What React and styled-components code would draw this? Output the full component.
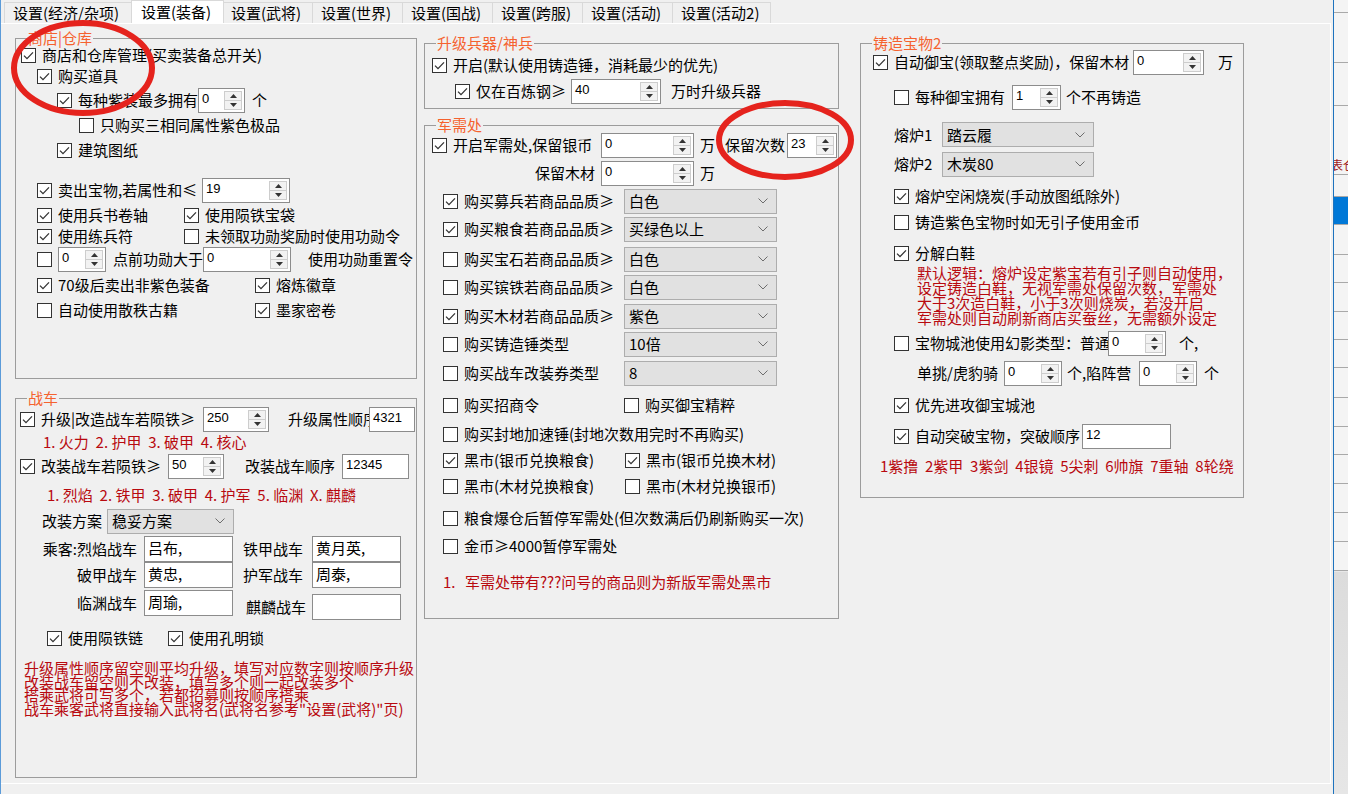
import React from 'react';
import styled, { createGlobalStyle } from 'styled-components';

const GlobalStyle = createGlobalStyle`
  html, body { margin: 0; padding: 0; background: #f0f0f0; }
  body {
    font-family: "Noto Sans CJK SC", "Noto Sans", sans-serif;
    font-size: 15px;
    color: #000;
  }
`;

const Window = styled.div`
  position: relative;
  width: 1348px;
  height: 794px;
  overflow: hidden;
  display: flex;
  background: #f0f0f0;
`;

const Main = styled.div`
  width: 1332px;
  flex: none;
  display: flex;
  flex-direction: column;
  border-left: 1px solid #5b9bd9;
`;

const TabBar = styled.div`
  height: 23px;
  display: flex;
  align-items: flex-end;
  padding-left: 3px;
`;

const Tab = styled.div`
  box-sizing: border-box;
  width: ${p => p.$w}px;
  height: ${p => (p.$active ? 23 : 21)}px;
  padding-left: ${p => (p.$active ? 9 : 8)}px;
  margin: ${p => (p.$active ? '0 -2px' : '0 -1px 0 0')};
  border: 1px solid #d9d9d9;
  border-bottom: none;
  background: ${p => (p.$active ? '#fff' : '#f0f0f0')};
  line-height: ${p => (p.$active ? 22 : 20)}px;
  white-space: nowrap;
  position: relative;
  z-index: ${p => (p.$active ? 1 : 0)};
`;

const Panel = styled.div`
  box-sizing: border-box;
  height: 761px;
  margin-right: 2px;
  border-top: 1px solid #fff;
  border-right: 1px solid #fff;
  border-bottom: 1px solid #fff;
  display: flex;
  align-items: flex-start;
  padding-left: 14px;
`;

const Column = styled.div`
  width: ${p => p.$w}px;
  margin-left: ${p => p.$ml || 0}px;
  flex: none;
  display: flex;
  flex-direction: column;
`;

const Group = styled.fieldset`
  box-sizing: border-box;
  width: 100%;
  height: ${p => p.$h}px;
  margin: ${p => p.$mt}px 0 0 0;
  padding: 0;
  min-width: 0;
  border: 1px solid #9c9c9c;
  display: flex;
  flex-direction: column;
`;

const Legend = styled.legend`
  margin-left: 11px;
  padding: 0 1px;
  line-height: 16px;
  color: #f5622f;
`;

const Row = styled.div`
  display: flex;
  align-items: center;
  flex: none;
  height: ${p => p.$h || 22}px;
  margin-top: ${p => p.$mt || 0}px;
  padding-left: ${p => p.$in || 0}px;
  white-space: nowrap;
`;

const Text = styled.span`
  flex: none;
  line-height: 18px;
  margin-left: ${p => p.$ml || 0}px;
  width: ${p => (p.$w ? `${p.$w}px` : 'auto')};
  text-align: ${p => (p.$right ? 'right' : 'left')};
  overflow: ${p => (p.$clip ? 'hidden' : 'visible')};
`;

const Shift = styled.div`
  display: flex;
  align-items: center;
  margin-top: 8px;
`;

const CheckWrap = styled.div`
  display: flex;
  align-items: center;
  flex: none;
  width: ${p => (p.$w ? `${p.$w}px` : 'auto')};
`;

const Box = styled.span`
  box-sizing: border-box;
  width: 15px;
  height: 15px;
  flex: none;
  border: 1px solid #333;
  background: #fff;
  display: flex;
  align-items: center;
  justify-content: center;
`;

const CheckLabel = styled.span`
  flex: none;
  margin-left: 6px;
  line-height: 18px;
  width: ${p => (p.$w ? `${p.$w}px` : 'auto')};
`;

function Check({ on, w, lw, children }) {
  return (
    <CheckWrap $w={w}>
      <Box>
        {on && (
          <svg width="11" height="9" viewBox="0 0 11 9">
            <path d="M1 4.6 L4 7.6 L10 1.4" fill="none" stroke="#333" strokeWidth="1.3" />
          </svg>
        )}
      </Box>
      {children && <CheckLabel $w={lw}>{children}</CheckLabel>}
    </CheckWrap>
  );
}

const Field = styled.div`
  box-sizing: border-box;
  width: ${p => p.$w}px;
  height: ${p => p.$hh || 25}px;
  margin-left: ${p => p.$ml || 0}px;
  flex: none;
  display: flex;
  border: 1px solid #8c8c8c;
  background: #fff;
`;

const Value = styled.span`
  flex: 1;
  overflow: hidden;
  font-family: ${p => (p.$cjk ? '"Noto Sans CJK SC", sans-serif' : '"Liberation Sans", Arial, sans-serif')};
  font-size: ${p => (p.$cjk ? 15 : 13)}px;
  line-height: ${p => (p.$cjk ? 20 : 15)}px;
  padding: ${p => (p.$cjk ? '1px 0 0 3px' : '2px 0 0 3px')};
`;

const SpinBtns = styled.div`
  width: 16px;
  margin: 2px 2px 2px 0;
  display: flex;
  flex-direction: column;
  border: 1px solid #cdcdcd;
  background: #f2f2f2;
`;

const SpinBtn = styled.div`
  flex: 1;
  display: flex;
  align-items: center;
  justify-content: center;
  & + & { border-top: 1px solid #cdcdcd; }
`;

function Spin({ w, ml, value }) {
  return (
    <Field $w={w} $ml={ml}>
      <Value>{value}</Value>
      <SpinBtns>
        <SpinBtn>
          <svg width="7" height="4" viewBox="0 0 7 4"><path d="M0 4 L3.5 0 L7 4 Z" fill="#333" /></svg>
        </SpinBtn>
        <SpinBtn>
          <svg width="7" height="4" viewBox="0 0 7 4"><path d="M0 0 L3.5 4 L7 0 Z" fill="#333" /></svg>
        </SpinBtn>
      </SpinBtns>
    </Field>
  );
}

function Input({ w, ml, value, cjk, h }) {
  return (
    <Field $w={w} $ml={ml} $hh={h}>
      <Value $cjk={cjk}>{value}</Value>
    </Field>
  );
}

const SelectBox = styled.div`
  box-sizing: border-box;
  width: ${p => p.$w}px;
  height: 25px;
  flex: none;
  display: flex;
  align-items: center;
  justify-content: space-between;
  padding: 0 8px 0 4px;
  border: 1px solid #adadad;
  background: #e1e1e1;
  line-height: 18px;
`;

function Select({ w, value }) {
  return (
    <SelectBox $w={w}>
      <span>{value}</span>
      <svg width="10" height="6" viewBox="0 0 10 6">
        <path d="M0.5 0.5 L5 5 L9.5 0.5" fill="none" stroke="#6d6d6d" strokeWidth="1" />
      </svg>
    </SelectBox>
  );
}

const Red = styled.div`
  flex: none;
  color: #b8090f;
  white-space: pre;
  margin-top: ${p => p.$mt || 0}px;
  padding-left: ${p => p.$in || 0}px;
  line-height: ${p => p.$lh || 18}px;
  height: ${p => (p.$h ? `${p.$h}px` : 'auto')};
  display: flex;
  align-items: center;
`;

const Para = styled.div`
  flex: none;
  color: #b8090f;
  white-space: pre;
  margin-top: ${p => p.$mt || 0}px;
  padding-left: ${p => p.$in || 0}px;
  line-height: ${p => p.$lh}px;
`;

const SideStrip = styled.div`
  flex: 1;
  border-left: 1px solid #1e73be;
  display: flex;
  flex-direction: column;
  background: linear-gradient(#f4f4f4, #f4f4f4 571px, #dcdcdc 572px, #e6e6e6);
  overflow: hidden;
`;

const StripRow = styled.div`
  box-sizing: border-box;
  flex: none;
  height: ${p => p.$h}px;
  border-bottom: 1px solid #a9a9a9;
  background: ${p => (p.$sel ? '#0078d7' : 'transparent')};
  color: #a02020;
  font-size: 12px;
  line-height: 14px;
  display: flex;
  align-items: flex-end;
  padding-bottom: 2px;
  white-space: nowrap;
  text-indent: -3px;
`;

const Ring = styled.svg`
  position: absolute;
  left: ${p => p.$x}px;
  top: ${p => p.$y}px;
  pointer-events: none;
`;

const tabs = [
  ['设置(经济/杂项)', 130],
  ['设置(装备)', 93],
  ['设置(武将)', 91],
  ['设置(世界)', 91],
  ['设置(国战)', 91],
  ['设置(跨服)', 91],
  ['设置(活动)', 91],
  ['设置(活动2)', 99],
];

const stripRows = [13, 50, 43, 69, 22, 28, 30, 28, 29, 28, 28, 30, 29, 28, 29, 29, 29, 29];

const buyRows = [
  [true, '购买募兵若商品品质≥', '白色', 2],
  [true, '购买粮食若商品品质≥', '买绿色以上', 2],
  [false, '购买宝石若商品品质≥', '白色', 4],
  [false, '购买镔铁若商品品质≥', '白色', 2],
  [true, '购买木材若商品品质≥', '紫色', 3],
  [false, '购买铸造锤类型', '10倍', 2],
  [false, '购买战车改装券类型', '8', 3],
];

export default function App() {
  return (
    <Window>
      <GlobalStyle />
      <Main>
        <TabBar>
          {tabs.map(([t, w], i) => (
            <Tab key={t} $w={w} $active={i === 1}>{t}</Tab>
          ))}
        </TabBar>
        <Panel>
          <Column $w={402}>
            <Group $h={349} $mt={6}>
              <Legend>商店|仓库</Legend>
              <Row $h={18} $in={5}><Check on>商店和仓库管理(买卖装备总开关)</Check></Row>
              <Row $mt={1} $in={21}><Check on>购买道具</Check></Row>
              <Row $h={26} $in={41}>
                <Check on lw={120}>每种紫装最多拥有</Check>
                <Spin w={47} value="0" />
                <Text $ml={7}>个</Text>
              </Row>
              <Row $mt={1} $in={63}><Check>只购买三相同属性紫色极品</Check></Row>
              <Row $mt={3} $in={41}><Check on>建筑图纸</Check></Row>
              <Row $h={26} $mt={16} $in={21}>
                <Check on lw={144}>卖出宝物,若属性和≤</Check>
                <Spin w={88} value="19" />
              </Row>
              <Row $mt={1} $in={21}>
                <Check on w={147}>使用兵书卷轴</Check>
                <Check on>使用陨铁宝袋</Check>
              </Row>
              <Row $h={20} $in={21}>
                <Check on w={147}>使用练兵符</Check>
                <Check>未领取功勋奖励时使用功勋令</Check>
              </Row>
              <Row $h={26} $in={21}>
                <Check />
                <Spin w={48} ml={6} value="0" />
                <Text $ml={7} $w={90}>点前功勋大于</Text>
                <Spin w={88} value="0" />
                <Text $ml={17}>使用功勋重置令</Text>
              </Row>
              <Row $mt={2} $in={21}>
                <Check on w={218}>70级后卖出非紫色装备</Check>
                <Check on>熔炼徽章</Check>
              </Row>
              <Row $mt={3} $in={21}>
                <Check w={218}>自动使用散秩古籍</Check>
                <Check on>墨家密卷</Check>
              </Row>
            </Group>

            <Group $h={388} $mt={11}>
              <Legend>战车</Legend>
              <Row $h={26} $in={4}>
                <Check on lw={162}>升级|改造战车若陨铁≥</Check>
                <Spin w={66} value="250" />
                <Text $ml={19} $w={81} $clip>升级属性顺序</Text>
                <Input w={46} value="4321" />
              </Row>
              <Red $h={18} $mt={1} $in={27}>1. 火力  2. 护甲  3. 破甲  4. 核心</Red>
              <Row $h={26} $mt={2} $in={4}>
                <Check on lw={127}>改装战车若陨铁≥</Check>
                <Spin w={56} value="50" />
                <Text $ml={21} $w={97}>改装战车顺序</Text>
                <Input w={67} value="12345" />
              </Row>
              <Red $h={18} $mt={7} $in={31}>1. 烈焰  2. 铁甲  3. 破甲  4. 护军  5. 临渊  X. 麒麟</Red>
              <Row $h={26} $mt={4} $in={26}>
                <Text $w={65}>改装方案</Text>
                <Select w={127} value="稳妥方案" />
              </Row>
              <Row $h={26} $mt={2} $in={24}>
                <Text $w={97} $right>乘客:烈焰战车</Text>
                <Input w={89} ml={7} cjk value="吕布," h={26} />
                <Text $ml={10} $w={60}>铁甲战车</Text>
                <Input w={89} ml={9} cjk value="黄月英," h={26} />
              </Row>
              <Row $h={26} $in={24}>
                <Text $w={97} $right>破甲战车</Text>
                <Input w={89} ml={7} cjk value="黄忠," h={26} />
                <Text $ml={10} $w={60}>护军战车</Text>
                <Input w={89} ml={9} cjk value="周泰," h={26} />
              </Row>
              <Row $h={26} $mt={2} $in={24}>
                <Text $w={97} $right>临渊战车</Text>
                <Input w={89} ml={7} cjk value="周瑜," h={26} />
                <Shift>
                  <Text $ml={13} $w={57}>麒麟战车</Text>
                  <Input w={89} ml={9} cjk value="" h={26} />
                </Shift>
              </Row>
              <Row $mt={11} $in={31}>
                <Check on w={121}>使用陨铁链</Check>
                <Check on>使用孔明锁</Check>
              </Row>
              <Para $mt={12} $in={8} $lh={13.5}>
                {'升级属性顺序留空则平均升级，填写对应数字则按顺序升级\n改装战车留空则不改装，填写多个则一起改装多个\n搭乘武将可写多个，若都招募则按顺序搭乘\n战车乘客武将直接输入武将名(武将名参考"设置(武将)"页)'}
              </Para>
            </Group>
          </Column>

          <Column $w={415} $ml={7}>
            <Group $h={74} $mt={11}>
              <Legend>升级兵器/神兵</Legend>
              <Row $mt={3} $in={7}><Check on>开启(默认使用铸造锤，消耗最少的优先)</Check></Row>
              <Row $h={26} $mt={2} $in={30}>
                <Check on lw={95}>仅在百炼钢≥</Check>
                <Spin w={90} value="40" />
                <Text $ml={10}>万时升级兵器</Text>
              </Row>
            </Group>

            <Group $h={502} $mt={8}>
              <Legend>军需处</Legend>
              <Row $h={24} $in={7}>
                <Check on lw={148}>开启军需处,保留银币</Check>
                <Spin w={93} value="0" />
                <Text $ml={6}>万</Text>
                <Text $ml={10} $w={62}>保留次数</Text>
                <Spin w={50} value="23" />
              </Row>
              <Row $h={26} $mt={3} $in={110}>
                <Text $w={66}>保留木材</Text>
                <Spin w={93} value="0" />
                <Text $ml={6}>万</Text>
              </Row>
              {buyRows.map(([on, label, val, mt]) => (
                <Row key={label} $h={26} $mt={mt} $in={18}>
                  <Check on={on} lw={160}>{label}</Check>
                  <Select w={153} value={val} />
                </Row>
              ))}
              <Row $mt={8} $in={18}>
                <Check w={181}>购买招商令</Check>
                <Check>购买御宝精粹</Check>
              </Row>
              <Row $mt={7} $in={18}><Check>购买封地加速锤(封地次数用完时不再购买)</Check></Row>
              <Row $mt={4} $in={18}>
                <Check on w={182}>黑市(银币兑换粮食)</Check>
                <Check on>黑市(银币兑换木材)</Check>
              </Row>
              <Row $mt={4} $in={18}>
                <Check w={182}>黑市(木材兑换粮食)</Check>
                <Check>黑市(木材兑换银币)</Check>
              </Row>
              <Row $mt={10} $in={18}><Check>粮食爆仓后暂停军需处(但次数满后仍刷新购买一次)</Check></Row>
              <Row $mt={6} $in={18}><Check>金币≥4000暂停军需处</Check></Row>
              <Red $h={20} $mt={15} $in={18}>
                <Text $w={22}>1.</Text>
                <span>军需处带有???问号的商品则为新版军需处黑市</span>
              </Red>
            </Group>
          </Column>

          <Column $w={384} $ml={21}>
            <Group $h={463} $mt={11}>
              <Legend>铸造宝物2</Legend>
              <Row $in={12}>
                <Check on lw={239}>自动御宝(领取整点奖励)，保留木材</Check>
                <Spin w={71} value="0" />
                <Text $ml={14}>万</Text>
              </Row>
              <Row $h={26} $mt={11} $in={33}>
                <Check lw={97}>每种御宝拥有</Check>
                <Spin w={49} value="1" />
                <Text $ml={5}>个不再铸造</Text>
              </Row>
              <Row $h={25} $mt={12} $in={33}>
                <Text $w={48}>熔炉1</Text>
                <Select w={152} value="踏云履" />
              </Row>
              <Row $h={24} $mt={5} $in={33}>
                <Text $w={48}>熔炉2</Text>
                <Select w={152} value="木炭80" />
              </Row>
              <Row $mt={9} $in={33}><Check on>熔炉空闲烧炭(手动放图纸除外)</Check></Row>
              <Row $mt={4} $in={33}><Check>铸造紫色宝物时如无引子使用金币</Check></Row>
              <Row $mt={9} $in={33}><Check on>分解白鞋</Check></Row>
              <Para $mt={1} $in={56} $lh={15}>
                {'默认逻辑：熔炉设定紫宝若有引子则自动使用，\n设定铸造白鞋，无视军需处保留次数，军需处\n大于3次造白鞋，小于3次则烧炭，若没开启\n军需处则自动刷新商店买蚕丝，无需额外设定'}
              </Para>
              <Row $h={26} $mt={5} $in={33}>
                <Check lw={193}>宝物城池使用幻影类型：普通</Check>
                <Spin w={58} value="0" />
                <Text $ml={13}>个,</Text>
              </Row>
              <Row $h={26} $mt={4} $in={56}>
                <Text $w={87}>单挑/虎豹骑</Text>
                <Spin w={58} value="0" />
                <Text $ml={5} $w={72}>个,陷阵营</Text>
                <Spin w={58} value="0" />
                <Text $ml={7}>个</Text>
              </Row>
              <Row $mt={8} $in={33}><Check on>优先进攻御宝城池</Check></Row>
              <Row $h={26} $mt={7} $in={33}>
                <Check on lw={167}>自动突破宝物，突破顺序</Check>
                <Input w={89} value="12" />
              </Row>
              <Red $h={20} $mt={7} $in={19}>1紫撸  2紫甲  3紫剑  4银镜  5尖刺  6帅旗  7重轴  8轮绕</Red>
            </Group>
          </Column>
        </Panel>
      </Main>

      <SideStrip>
        {stripRows.map((h, i) => (
          <StripRow key={i} $h={h} $sel={i === 5}>{i === 3 ? '表仓' : ''}</StripRow>
        ))}
      </SideStrip>

      <Ring $x={8} $y={16} width="155" height="108" viewBox="0 0 155 108">
        <ellipse cx="75" cy="52" rx="69" ry="45" fill="none" stroke="#e5231d" strokeWidth="6" />
      </Ring>
      <Ring $x={712} $y={97} width="146" height="87" viewBox="0 0 146 87">
        <ellipse cx="73" cy="43" rx="66" ry="37" fill="none" stroke="#e5231d" strokeWidth="6" />
      </Ring>
    </Window>
  );
}
